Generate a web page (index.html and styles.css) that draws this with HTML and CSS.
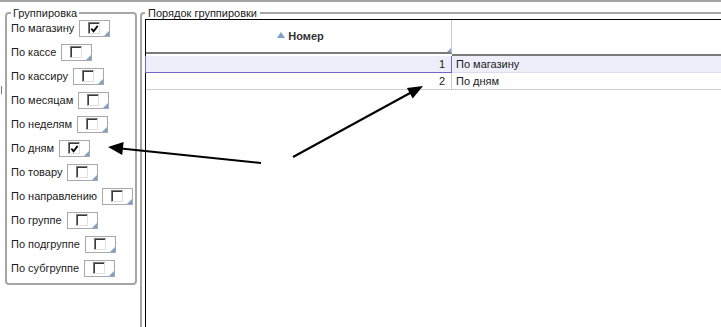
FILE: index.html
```html
<!DOCTYPE html>
<html lang="ru">
<head>
    <meta charset="UTF-8">
    <title>Группировка</title>
    <link rel="stylesheet" href="styles.css">
</head>
<body>
    <div class="topline"></div>
    <div class="main">
        <div class="sidebar">
            <span class="grip"></span>
            <fieldset class="group">
                <legend>Группировка</legend>
                <div class="opts">
                    <div class="opt"><span>По магазину</span><span class="box"><span class="chk"><svg width="10" height="10" viewBox="0 0 10 10"><polyline points="1.5,4.5 4,7.5 8.5,1.5" fill="none" stroke="#000" stroke-width="2"/></svg></span></span></div>
                    <div class="opt"><span>По кассе</span><span class="box"><span class="chk"></span></span></div>
                    <div class="opt"><span>По кассиру</span><span class="box"><span class="chk"></span></span></div>
                    <div class="opt"><span>По месяцам</span><span class="box"><span class="chk"></span></span></div>
                    <div class="opt"><span>По неделям</span><span class="box"><span class="chk"></span></span></div>
                    <div class="opt"><span>По дням</span><span class="box"><span class="chk"><svg width="10" height="10" viewBox="0 0 10 10"><polyline points="1.5,4.5 4,7.5 8.5,1.5" fill="none" stroke="#000" stroke-width="2"/></svg></span></span></div>
                    <div class="opt"><span>По товару</span><span class="box"><span class="chk"></span></span></div>
                    <div class="opt"><span>По направлению</span><span class="box"><span class="chk"></span></span></div>
                    <div class="opt"><span>По группе</span><span class="box"><span class="chk"></span></span></div>
                    <div class="opt"><span>По подгруппе</span><span class="box"><span class="chk"></span></span></div>
                    <div class="opt"><span>По субгруппе</span><span class="box"><span class="chk"></span></span></div>
                </div>
            </fieldset>
        </div>
        <div class="pane">
            <fieldset class="order">
                <legend>Порядок группировки</legend>
                <div class="grid">
                    <div class="hcell first"><svg width="8" height="6" viewBox="0 0 8 6"><polygon points="4,0 8,6 0,6" fill="#7f9fcc"/></svg>Номер</div>
                    <div class="hcell"></div>
                    <div class="cell num sel">1</div>
                    <div class="cell txt sel-row">По магазину</div>
                    <div class="cell num">2</div>
                    <div class="cell txt">По дням</div>
                </div>
            </fieldset>
        </div>
    </div>

    <!-- стрелки поверх формы -->
    <svg class="arrows" width="721" height="327" viewBox="0 0 721 327">
        <line x1="261" y1="163" x2="121" y2="148.4" stroke="#000" stroke-width="2"/>
        <polygon points="108,147 123.6,142.1 122.2,155" fill="#000"/>
        <line x1="293" y1="157" x2="411" y2="92.5" stroke="#000" stroke-width="2"/>
        <polygon points="423,86 412.7,98.5 406.9,87.9" fill="#000"/>
    </svg>
</body>
</html>
```

FILE: styles.css
```css
body {
    margin: 0;
    font-family: "Liberation Sans", Arial, sans-serif;
    font-size: 11px;
    color: #1a1a1a;
    background-color: #fff;
    height: 327px;
    overflow: hidden;
}
.topline {
    height: 2px;
    background-color: #a3a3a3;
}
.main {
    display: flex;
    height: 325px;
}
.sidebar {
    width: 139px;
    flex-shrink: 0;
    position: relative;
}
.grip {
    position: absolute;
    left: 1px;
    top: 84px;
    width: 1px;
    height: 8px;
    background-color: #777;
}
fieldset {
    margin: 5px 0 0 0;
    border: 2px solid #a6a6a6;
    border-radius: 4px;
    box-sizing: border-box;
}
legend {
    padding: 0 2px;
    line-height: 12px;
}
.group {
    margin-left: 5px;
    width: 132px;
    padding: 0 0 3px 4px;
}
.opts {
    margin-top: -3px;
}
.opt {
    height: 24px;
    display: flex;
    align-items: center;
    gap: 5px;
}
.box {
    position: relative;
    width: 31px;
    height: 17px;
    box-sizing: border-box;
    border: 1px solid #a9a9a9;
    display: flex;
    align-items: center;
    padding-left: 8px;
}
.box::after {
    content: "";
    position: absolute;
    right: 0;
    bottom: 0;
    border-left: 5px solid transparent;
    border-bottom: 5px solid #7f9fcc;
}
.chk {
    width: 12px;
    height: 12px;
    box-sizing: border-box;
    border: 1px solid;
    border-color: #7a7a7a #e0e0e0 #e0e0e0 #7a7a7a;
    box-shadow: inset 1px 1px 0 #3c3c3c;
    background-color: #fff;
    display: flex;
    align-items: center;
    justify-content: center;
}
.chk svg {
    margin: 1px 0 0 1px;
}
.pane {
    flex: 1;
    overflow: hidden;
}
.order {
    margin-left: 1px;
    width: calc(100% + 20px);
    height: 400px;
    padding: 0 0 0 3px;
}
.order legend {
    padding: 0 3px;
}
.grid {
    display: grid;
    grid-template-columns: 306px 1fr;
    align-content: start;
    height: 380px;
    border-top: 1px solid #000;
    border-left: 1px solid #000;
}
.hcell {
    height: 34px;
    border-bottom: 2px solid #7a7a7a;
    display: flex;
    align-items: center;
    justify-content: center;
    gap: 3px;
    font-weight: bold;
    color: #333;
}
.hcell.first {
    position: relative;
    border-right: 1px solid #c8c8c8;
    padding-left: 4px;
    box-sizing: border-box;
}
.hcell.first svg {
    margin-top: -2px;
}
.hcell.first::after {
    content: "";
    position: absolute;
    right: 0;
    bottom: 0;
    border-left: 4px solid transparent;
    border-bottom: 4px solid #7f9fcc;
}
.cell {
    height: 17px;
    line-height: 16px;
    box-sizing: border-box;
    border-bottom: 1px solid #d0d0d0;
}
.num {
    text-align: right;
    padding-right: 6px;
    border-right: 1px solid #c8c8c8;
}
.txt {
    padding-left: 4px;
}
.sel {
    position: relative;
    background-color: #eeeefb;
    border-bottom-color: #7466c4;
    border-right-color: #7466c4;
}
.sel::before {
    content: "";
    position: absolute;
    left: -1px;
    top: 0;
    bottom: -1px;
    width: 1px;
    background-color: #7466c4;
}
.sel-row {
    background-color: #eeeefb;
    border-bottom-color: #dcdcec;
}
.arrows {
    position: absolute;
    left: 0;
    top: 0;
    pointer-events: none;
}
```
